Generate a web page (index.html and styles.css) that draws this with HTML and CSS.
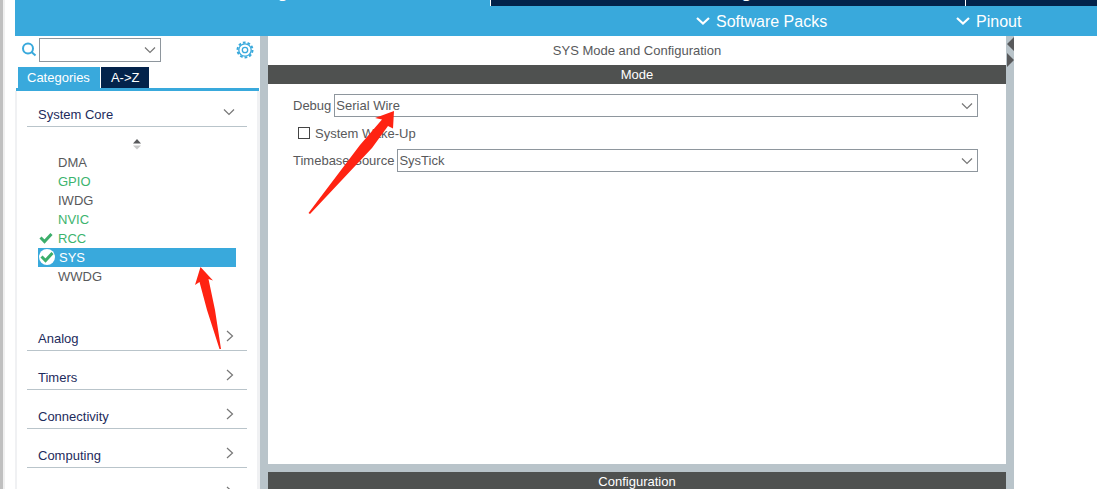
FILE: index.html
```html
<!DOCTYPE html>
<html lang="en">
<head>
<meta charset="utf-8">
<meta name="viewport" content="width=device-width, initial-scale=1">
<title>Pinout &amp; Configuration</title>
<link rel="stylesheet" href="styles.css">
</head>
<body>
<svg class="defs" aria-hidden="true">
  <symbol id="down" viewBox="0 0 12 8"><path d="M1 1.500l5 5 5-5" fill="none" stroke="currentColor" stroke-width="1.200"/></symbol>
  <symbol id="right" viewBox="0 0 8 12"><path d="M1 1l5.500 5-5.500 5" fill="none" stroke="currentColor" stroke-width="1.200"/></symbol>
  <symbol id="bold-down" viewBox="0 0 14 10"><path d="M1 2l6 5.500 6-5.500" fill="none" stroke="currentColor" stroke-width="2.200"/></symbol>
  <symbol id="check" viewBox="0 0 14 12"><path d="M1.500 5.500l4 4L12.500 2" fill="none" stroke="currentColor" stroke-width="3"/></symbol>
</svg>
<div class="app">
  <nav class="views" aria-label="Views">
    <button class="view view-active">Pinout &amp; Configuration</button>
    <button class="view">Clock Configuration</button>
    <button class="view" aria-label="Project Manager"></button>
  </nav>
  <div class="menubar">
    <button class="menu menu-packs"><svg class="menu-icon"><use href="#bold-down"/></svg>Software Packs</button>
    <button class="menu menu-pinout"><svg class="menu-icon"><use href="#bold-down"/></svg>Pinout</button>
  </div>
  <div class="workspace">
    <aside class="sidebar">
      <div class="search">
        <svg class="search-icon" viewBox="0 0 16 16"><circle cx="7" cy="6.500" r="5"/><path d="M10.500 10L14.500 13.500"/></svg>
        <div class="combo search-combo">
          <input class="field" type="text" aria-label="Search">
          <svg class="combo-icon"><use href="#down"/></svg>
        </div>
        <button class="gear" aria-label="Settings">
          <svg class="gear-icon" viewBox="0 0 18 18"><circle class="gear-teeth" cx="9" cy="9" r="7.500"/><circle cx="9" cy="9" r="6.200"/><circle cx="9" cy="9" r="2.700"/></svg>
        </button>
      </div>
      <div class="tabs">
        <button class="tab tab-active">Categories</button>
        <button class="tab">A-&gt;Z</button>
      </div>
      <div class="categories">
        <button class="category category-open">System Core<svg class="down-icon"><use href="#down"/></svg></button>
        <div class="modules">
          <svg class="sorter" viewBox="0 0 8 11"><path d="M0 4.500L4 0l4 4.500z" fill="#58595b"/><path d="M0 6.500h8L4 10.500z" fill="#c8c8c8"/></svg>
          <ul class="module-list">
            <li class="module">DMA</li>
            <li class="module module-on">GPIO</li>
            <li class="module">IWDG</li>
            <li class="module module-on">NVIC</li>
            <li class="module module-on"><svg class="tick"><use href="#check"/></svg>RCC</li>
            <li class="module module-selected"><span class="badge"><svg class="tick"><use href="#check"/></svg></span>SYS</li>
            <li class="module">WWDG</li>
          </ul>
        </div>
        <button class="category">Analog<svg class="right-icon"><use href="#right"/></svg></button>
        <button class="category">Timers<svg class="right-icon"><use href="#right"/></svg></button>
        <button class="category">Connectivity<svg class="right-icon"><use href="#right"/></svg></button>
        <button class="category">Computing<svg class="right-icon"><use href="#right"/></svg></button>
        <button class="category" aria-label="More"><svg class="right-icon"><use href="#right"/></svg></button>
      </div>
    </aside>
    <div class="splitter"></div>
    <main class="detail">
      <section class="mode">
        <h1 class="title">SYS Mode and Configuration</h1>
        <h2 class="band">Mode</h2>
        <form class="form">
          <div class="row">
            <label for="debug">Debug</label>
            <div class="combo">
              <select class="field" id="debug"><option>Serial Wire</option></select>
              <svg class="combo-icon"><use href="#down"/></svg>
            </div>
          </div>
          <label class="row check-row"><input class="box" type="checkbox">System Wake-Up</label>
          <div class="row">
            <label for="timebase">Timebase Source</label>
            <div class="combo">
              <select class="field" id="timebase"><option>SysTick</option></select>
              <svg class="combo-icon"><use href="#down"/></svg>
            </div>
          </div>
        </form>
      </section>
      <section class="config"><h2 class="band">Configuration</h2></section>
    </main>
    <div class="splitter">
      <svg class="handles" viewBox="0 0 8 32"><path d="M8 1v14L1 8zM1 17l7 7-7 7z" fill="#58595b"/></svg>
    </div>
  </div>
</div>
<svg class="pointers" width="420" height="360" aria-hidden="true">
  <path d="M394 111L375 118l7 1.500L360 145L308.500 213l1.500 1L372 148L388 126l5 2.500z"/>
  <path d="M200.500 267L195 285l4.500-3L207 310L219.500 349h1.500L215 310L208.500 279l4.500 1.500z"/>
</svg>
</body>
</html>
```
FILE: styles.css
```css
* { box-sizing: border-box; }
body {
  margin: 0;
  background: #fff;
  color: #58595b;
  font: 13px/19px "Liberation Sans", Arial, sans-serif;
}
button, input, select { font: inherit; color: inherit; }
button { border: 0; padding: 0; background: none; }
h1, h2, ul { margin: 0; padding: 0; font-size: 13px; font-weight: 400; }
.defs { display: none; }

.app {
  display: flex;
  flex-direction: column;
  height: 100vh;
  overflow: hidden;
  border-left: 3px solid #c0c0c0;
  padding-left: 12px;
  background: linear-gradient(to right, #f0f0f0 2px, #fff 2px);
}

.views {
  display: grid;
  grid-template-columns: 476fr 475fr 131fr;
  grid-template-rows: 6px;
  flex: none;
  align-items: end;
}
.view {
  display: flex;
  justify-content: center;
  height: 21px;
  padding-bottom: 5px;
  border-right: 1px solid #fff;
  background: #03234b;
  color: #fff;
  font-size: 17px;
  font-weight: 700;
  line-height: 16px;
}
.view:last-child { border-right: 0; }
.view-active { background: #39a9dc; }

.menubar {
  display: grid;
  grid-template-columns: 681fr 260fr 141fr;
  flex: none;
  height: 30px;
  background: #39a9dc;
}
.menu {
  display: flex;
  align-items: center;
  gap: 6px;
  color: #fff;
  font-size: 16px;
}
.menu-packs { grid-column: 2; }
.menu-pinout { grid-column: 3; }
.menu-icon { width: 14px; height: 10px; }

.workspace {
  display: grid;
  grid-template-columns: 245px 8px minmax(0, 738fr) 8px 83fr;
  flex: 1;
  min-height: 0;
}
.splitter { background: #b9c4ca; }
.handles { display: block; width: 8px; height: 32px; }

.sidebar { min-height: 0; overflow: hidden; }
.search {
  display: flex;
  align-items: center;
  gap: 2px;
  height: 27px;
  padding: 1px 6px 0;
}
.search-icon { width: 16px; height: 16px; fill: none; stroke: #39a9dc; stroke-width: 2; }
.gear { margin-left: auto; }
.gear-icon { display: block; width: 18px; height: 18px; fill: none; stroke: #39a9dc; stroke-width: 1.300; }
.gear-teeth { stroke-width: 2; stroke-dasharray: 2.700 2.012; }

.combo { position: relative; flex: 1; }
.search-combo { flex: 0 0 122px; }
.field {
  display: block;
  width: 100%;
  height: 23px;
  margin: 0;
  padding: 0 20px 0 1px;
  appearance: none;
  border: 1px solid #8e969d;
  border-radius: 0;
  background: #fff;
}
.search-combo .field { height: 24px; }
.combo-icon {
  position: absolute;
  top: 8px;
  right: 5px;
  width: 12px;
  height: 8px;
  color: #777;
  pointer-events: none;
}

.tabs {
  display: flex;
  gap: 1px;
  margin: 4px 1px 0;
  padding-left: 2px;
  border-bottom: 3px solid #39a9dc;
}
.tab { height: 21px; padding: 0 10px; background: #03234b; color: #fff; }
.tab-active { padding: 0 10px 0 9px; background: #39a9dc; }

.categories {
  padding: 0 10px;
  border: solid #f0f1f3;
  border-width: 0 3px 0 2px;
}
.category {
  display: flex;
  justify-content: space-between;
  align-items: flex-end;
  width: 100%;
  height: 39px;
  padding: 0 12px 2px 11px;
  border-bottom: 1px solid #b9c4ca;
  color: #1d2b5c;
}
.category-open { height: 36px; }
.down-icon { width: 12px; height: 8px; margin-bottom: 8px; color: #777; }
.right-icon { width: 8px; height: 12px; margin: 0 1px 6px auto; color: #777; }

.modules { padding: 12px 11px 26px; }
.sorter { display: block; width: 8px; height: 11px; margin: 0 auto 3px; }
.module-list { list-style: none; }
.module { position: relative; height: 19px; padding-left: 20px; }
.module-on { color: #3cb46e; }
.module-selected { padding-left: 21px; background: #39a9dc; color: #fff; }
.tick { position: absolute; top: 3px; left: 1px; width: 14px; height: 12px; color: #3cae6b; }
.badge {
  position: absolute;
  top: 1px;
  left: 1px;
  width: 16px;
  height: 16px;
  border-radius: 50%;
  background: #fff;
}
.badge .tick { top: 2px; }

.detail { display: flex; flex-direction: column; gap: 8px; min-height: 0; background: #b9c4ca; }
.mode { flex: 1; min-height: 0; background: #fff; }
.title { line-height: 29px; text-align: center; }
.band { background: #4f5150; color: #fff; text-align: center; }
.config { height: 17px; overflow: hidden; }

.form { padding: 10px 28px 0 25px; }
.row { display: flex; align-items: center; gap: 3px; }
.check-row { height: 32px; padding-left: 5px; gap: 5px; }
.box {
  width: 12px;
  height: 12px;
  margin: 0;
  appearance: none;
  border: 1px solid #444;
  background: #fff;
}

.pointers { position: absolute; top: 0; left: 0; fill: #ff2312; pointer-events: none; }
```
